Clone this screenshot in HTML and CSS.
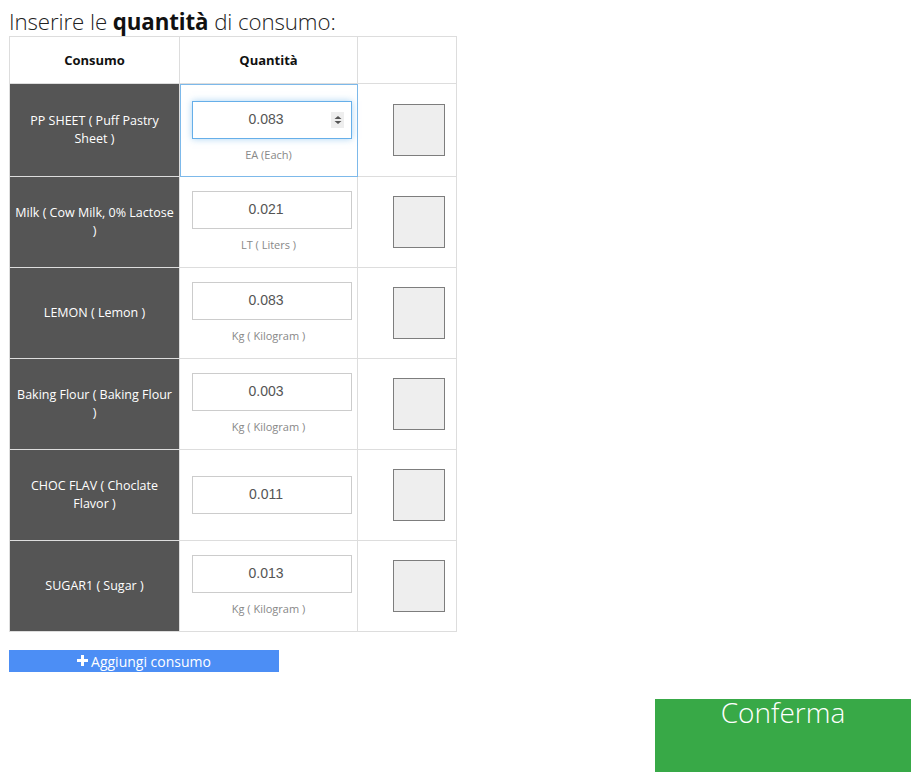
FILE: index.html
```html
<!DOCTYPE html>
<html lang="it">
<head>
<meta charset="utf-8">
<title>Consumo</title>
<link rel="stylesheet" href="styles.css">
</head>
<body>
<h3 class="title">Inserire le <b>quantità</b> di consumo:</h3>
<table class="grid">
  <colgroup><col class="c1"><col class="c2"><col class="c3"></colgroup>
  <thead>
    <tr><th>Consumo</th><th>Quantità</th><th></th></tr>
  </thead>
  <tbody>
    <tr class="first">
      <td class="name">PP SHEET ( Puff Pastry Sheet )</td>
      <td class="qty focused">
        <div class="field focus"><span class="val">0.083</span>
          <span class="spin"><svg width="8" height="10" viewBox="0 0 8 10"><path d="M4 1 L7.5 4 H0.5 Z M4 9 L7.5 6 H0.5 Z" fill="#555"/></svg></span>
        </div>
        <div class="unit">EA (Each)</div>
      </td>
      <td class="chk"><span class="box"></span></td>
    </tr>
    <tr>
      <td class="name">Milk ( Cow Milk, 0% Lactose )</td>
      <td class="qty"><div class="field"><span class="val">0.021</span></div><div class="unit">LT ( Liters )</div></td>
      <td class="chk"><span class="box"></span></td>
    </tr>
    <tr>
      <td class="name">LEMON ( Lemon )</td>
      <td class="qty"><div class="field"><span class="val">0.083</span></div><div class="unit">Kg ( Kilogram )</div></td>
      <td class="chk"><span class="box"></span></td>
    </tr>
    <tr>
      <td class="name">Baking Flour ( Baking Flour )</td>
      <td class="qty"><div class="field"><span class="val">0.003</span></div><div class="unit">Kg ( Kilogram )</div></td>
      <td class="chk"><span class="box"></span></td>
    </tr>
    <tr>
      <td class="name">CHOC FLAV ( Choclate Flavor )</td>
      <td class="qty"><div class="field"><span class="val">0.011</span></div></td>
      <td class="chk"><span class="box"></span></td>
    </tr>
    <tr>
      <td class="name">SUGAR1 ( Sugar )</td>
      <td class="qty"><div class="field"><span class="val">0.013</span></div><div class="unit">Kg ( Kilogram )</div></td>
      <td class="chk"><span class="box"></span></td>
    </tr>
  </tbody>
</table>
<button class="add" type="button"><svg class="plus" width="11" height="11" viewBox="0 0 11 11"><path d="M4 0 H7 V4 H11 V7 H7 V11 H4 V7 H0 V4 H4 Z" fill="#fff"/></svg>Aggiungi consumo</button>
<div class="footer"><button class="confirm" type="button">Conferma</button></div>
</body>
</html>
```
FILE: styles.css
```css
html, body { margin: 0; padding: 0; background: #fff; }
body {
  padding: 8px 8px 0 9px;
  font-family: "Open Sans", "Liberation Sans", sans-serif;
  color: #222;
  overflow: hidden;
}
.title {
  margin: 0;
  font-size: 22.3px;
  font-weight: 300;
  line-height: 28px;
  color: #222;
  letter-spacing: -0.1px;
}
.title b { font-weight: 700; color: #111; }
.grid {
  border-collapse: collapse;
  width: 447px;
  table-layout: fixed;
}
.c1 { width: 170px; }
.c2 { width: 178px; }
.c3 { width: 99px; }
.grid th, .grid td {
  border: 1px solid #ddd;
  padding: 0;
  text-align: center;
  vertical-align: middle;
}
.grid th {
  height: 46px;
  font-size: 13px;
  font-weight: 700;
  color: #111;
}
.grid td { height: 90px; }
.grid .first td { height: 92px; }
.name {
  background: #555;
  color: #fff;
  font-size: 12.5px;
  line-height: 18px;
  padding: 0 4px !important;
}
.qty { padding: 0 12px !important; }
.grid .first .qty { padding-top: 3px !important; height: 89px; }
.focused { outline: 1px solid #7db9ea; outline-offset: -1px; }
.field {
  position: relative;
  width: 158px;
  height: 36px;
  border: 1px solid #ccc;
  display: flex;
  align-items: center;
  justify-content: center;
  font-family: "Liberation Sans", Arial, sans-serif;
  font-size: 14px;
  color: #555;
  background: #fff;
}
.val { position: relative; top: -1px; left: -6px; }
.field.focus {
  border-color: #66afe9;
  box-shadow: 0 0 7px rgba(102, 175, 233, 0.55);
}
.spin {
  position: absolute;
  right: 7px;
  top: 10px;
  width: 13px;
  height: 16px;
  background: #eee;
  display: flex;
  align-items: center;
  justify-content: center;
}
.unit {
  margin-top: 8px;
  font-size: 11px;
  line-height: 16px;
  color: #888;
}
.chk { text-align: right !important; padding-right: 11px !important; }
.box {
  display: inline-block;
  width: 50px;
  height: 50px;
  border: 1px solid #7d7d7d;
  background: #eee;
  vertical-align: middle;
}
.add {
  display: flex;
  align-items: center;
  justify-content: center;
  gap: 3px;
  margin-top: 18px;
  width: 270px;
  height: 22px;
  border: 0;
  padding: 0;
  background: #4c8ef5;
  color: #fff;
  font-family: "Open Sans", sans-serif;
  font-size: 14px;
}
.plus { margin-top: -1px; }
.footer {
  display: flex;
  justify-content: flex-end;
  margin-right: -4px;
  margin-top: 27px;
}
.confirm {
  width: 256px;
  height: 80px;
  border: 0;
  padding: 0;
  background: #38a947;
  color: #fff;
  font-family: "Open Sans", sans-serif;
  font-weight: 300;
  font-size: 28px;
  line-height: 26px;
  display: flex;
  justify-content: center;
  align-items: flex-start;
}
```
